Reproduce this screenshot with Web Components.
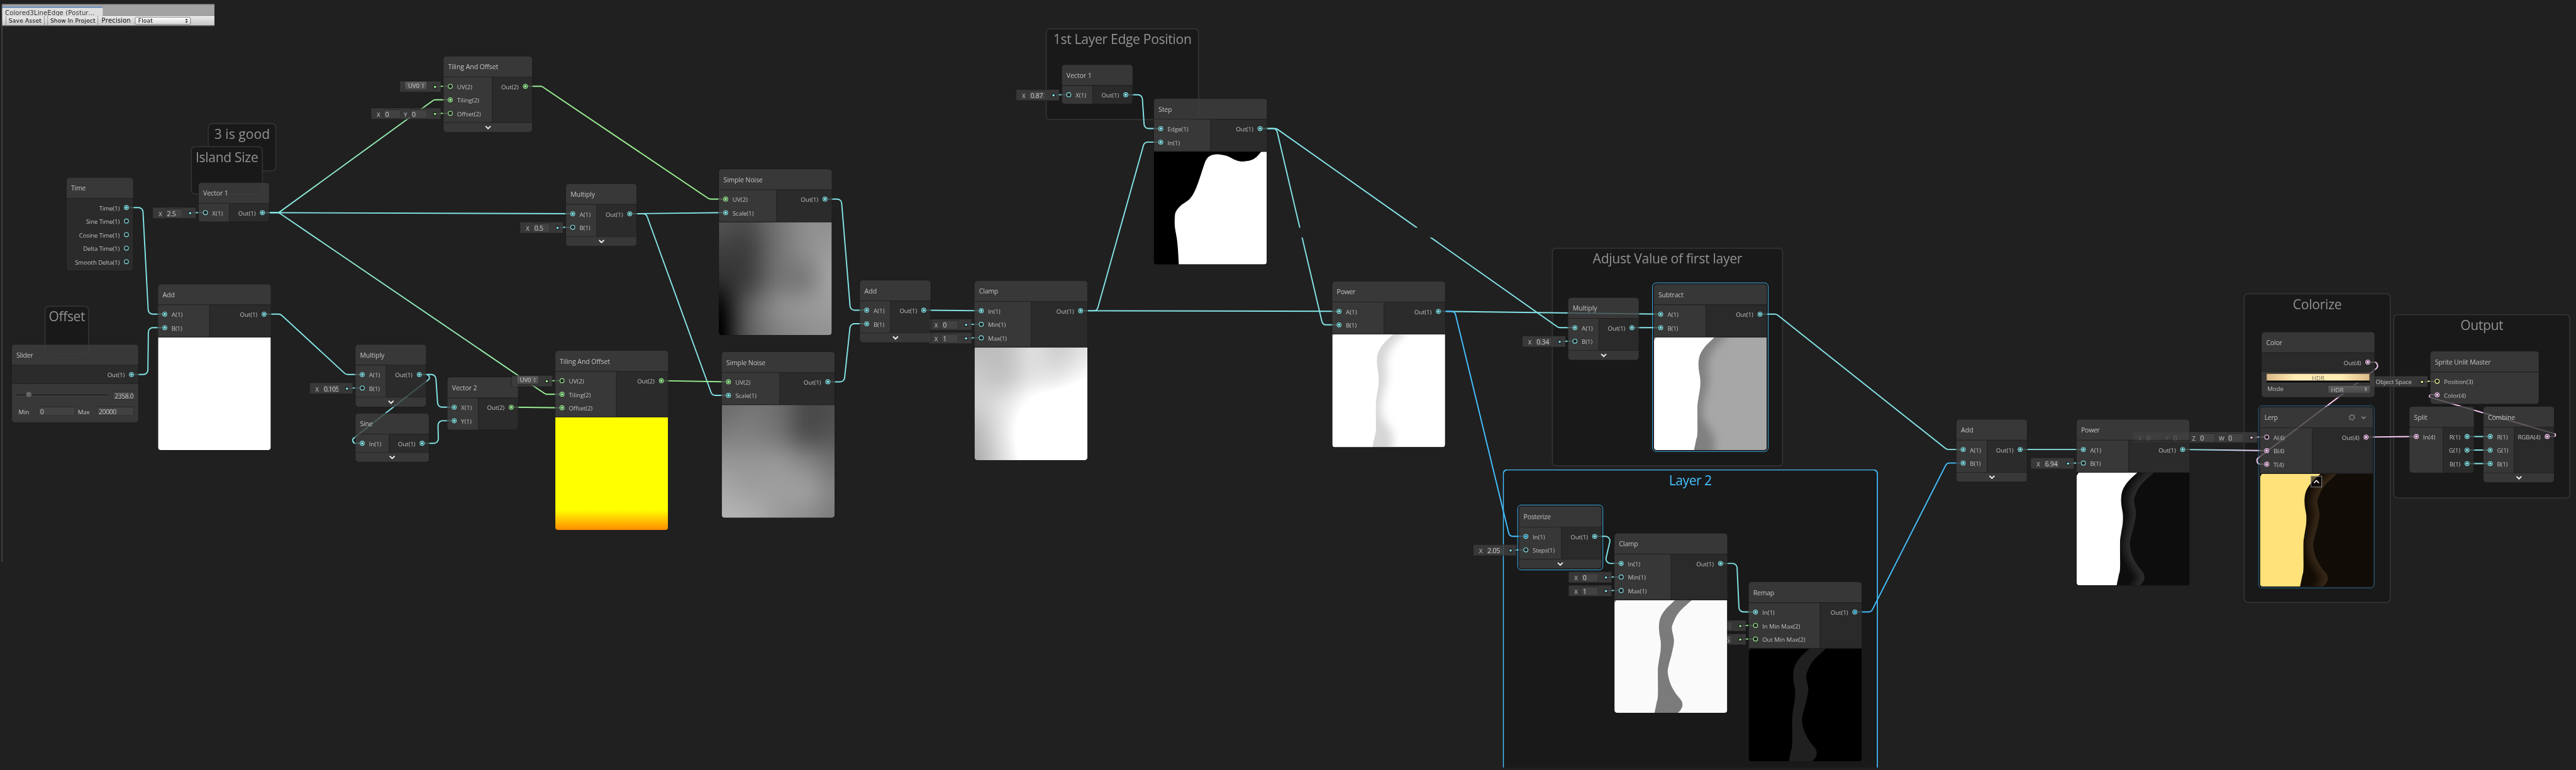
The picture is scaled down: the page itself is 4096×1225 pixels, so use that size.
<!DOCTYPE html>
<html lang="en">
<head>
<meta charset="utf-8">
<title>Shader Graph</title>
<style>
html,body{margin:0;background:#202020;overflow:hidden}
body{width:4096px;height:1225px;font-family:"Open Sans","Noto Sans",sans-serif}
</style>
</head>
<body>
<graph-canvas>
  <graph-group caption="3 is good" style="left:368px;top:218px;width:122px;height:86px"></graph-group>
  <graph-group caption="Island Size" style="left:338px;top:259px;width:128px;height:86px"></graph-group>
  <graph-group caption="Offset" style="left:79px;top:542px;width:79px;height:86px"></graph-group>
  <graph-group caption="1st Layer Edge Position" style="left:1853px;top:50px;width:272px;height:163px"></graph-group>
  <graph-group caption="Adjust Value of first layer" style="left:2750px;top:439px;width:410px;height:388px"></graph-group>
  <graph-group caption="Layer 2" selected style="left:2663px;top:832px;width:665px;height:529px"></graph-group>
  <graph-group caption="Colorize" style="left:3976px;top:520px;width:261px;height:549px"></graph-group>
  <graph-group caption="Output" style="left:4241px;top:557px;width:314px;height:327px"></graph-group>

  <graph-edges></graph-edges>

  <shader-node name="Time" style="left:118px;top:315px;width:118px">
    <graph-port slot="out" label="Time(1)" linked></graph-port>
    <graph-port slot="out" label="Sine Time(1)"></graph-port>
    <graph-port slot="out" label="Cosine Time(1)"></graph-port>
    <graph-port slot="out" label="Delta Time(1)"></graph-port>
    <graph-port slot="out" label="Smooth Delta(1)"></graph-port>
  </shader-node>
  <shader-node name="Vector 1" style="left:352px;top:324px;width:125px;--in:54px">
    <graph-port slot="in" label="X(1)" fields="X:2.5"></graph-port>
    <graph-port slot="out" label="Out(1)" linked></graph-port>
  </shader-node>
  <shader-node name="Add" style="left:280px;top:504px;width:200px;--in:91px">
    <graph-port slot="in" label="A(1)" linked></graph-port>
    <graph-port slot="in" label="B(1)" linked></graph-port>
    <graph-port slot="out" label="Out(1)" linked></graph-port>
    <node-preview slot="body" kind="white"></node-preview>
  </shader-node>
  <shader-node name="Slider" style="left:21px;top:611px;width:224px">
    <graph-port slot="out" label="Out(1)" linked></graph-port>
    <slider-controls slot="body"></slider-controls>
  </shader-node>
  <shader-node name="Tiling And Offset" foldable style="left:786px;top:100px;width:157px;--in:86px">
    <graph-port slot="in" kind="g" label="UV(2)" popup="UV0"></graph-port>
    <graph-port slot="in" kind="g" label="Tiling(2)" linked></graph-port>
    <graph-port slot="in" kind="g" label="Offset(2)" fields="X:0,Y:0"></graph-port>
    <graph-port slot="out" kind="g" label="Out(2)" linked></graph-port>
  </shader-node>
  <shader-node name="Multiply" foldable style="left:1003px;top:326px;width:125px;--in:54px">
    <graph-port slot="in" label="A(1)" linked></graph-port>
    <graph-port slot="in" label="B(1)" fields="X:0.5"></graph-port>
    <graph-port slot="out" label="Out(1)" linked></graph-port>
  </shader-node>
  <shader-node name="Multiply" foldable style="left:630px;top:611px;width:125px;--in:54px">
    <graph-port slot="in" label="A(1)" linked></graph-port>
    <graph-port slot="in" label="B(1)" fields="X:0.105"></graph-port>
    <graph-port slot="out" label="Out(1)" linked></graph-port>
  </shader-node>
  <shader-node name="Sine" foldable style="left:630px;top:733px;width:130px;--in:59px">
    <graph-port slot="in" label="In(1)" linked></graph-port>
    <graph-port slot="out" label="Out(1)" linked></graph-port>
  </shader-node>
  <shader-node name="Vector 2" style="left:793px;top:669px;width:125px;--in:54px">
    <graph-port slot="in" label="X(1)" linked></graph-port>
    <graph-port slot="in" label="Y(1)" linked></graph-port>
    <graph-port slot="out" kind="g" label="Out(2)" linked></graph-port>
  </shader-node>
  <shader-node name="Tiling And Offset" style="left:984px;top:622px;width:200px;--in:108px">
    <graph-port slot="in" kind="g" label="UV(2)" popup="UV0"></graph-port>
    <graph-port slot="in" kind="g" label="Tiling(2)" linked></graph-port>
    <graph-port slot="in" kind="g" label="Offset(2)" linked></graph-port>
    <graph-port slot="out" kind="g" label="Out(2)" linked></graph-port>
    <node-preview slot="body" kind="yellow"></node-preview>
  </shader-node>
  <shader-node name="Simple Noise" style="left:1274px;top:300px;width:200px;--in:102px">
    <graph-port slot="in" kind="g" label="UV(2)" linked></graph-port>
    <graph-port slot="in" label="Scale(1)" linked></graph-port>
    <graph-port slot="out" label="Out(1)" linked></graph-port>
    <node-preview slot="body" kind="noiseA"></node-preview>
  </shader-node>
  <shader-node name="Simple Noise" style="left:1279px;top:624px;width:200px;--in:102px">
    <graph-port slot="in" kind="g" label="UV(2)" linked></graph-port>
    <graph-port slot="in" label="Scale(1)" linked></graph-port>
    <graph-port slot="out" label="Out(1)" linked></graph-port>
    <node-preview slot="body" kind="noiseB"></node-preview>
  </shader-node>
  <shader-node name="Clamp" style="left:1727px;top:498px;width:200px;--in:100px">
    <graph-port slot="in" label="In(1)" linked></graph-port>
    <graph-port slot="in" label="Min(1)" fields="X:0"></graph-port>
    <graph-port slot="in" label="Max(1)" fields="X:1"></graph-port>
    <graph-port slot="out" label="Out(1)" linked></graph-port>
    <node-preview slot="body" kind="clamp"></node-preview>
  </shader-node>
  <shader-node name="Add" foldable style="left:1524px;top:497px;width:125px;--in:54px">
    <graph-port slot="in" label="A(1)" linked></graph-port>
    <graph-port slot="in" label="B(1)" linked></graph-port>
    <graph-port slot="out" label="Out(1)" linked></graph-port>
  </shader-node>
  <shader-node name="Vector 1" style="left:1882px;top:115px;width:125px;--in:54px">
    <graph-port slot="in" label="X(1)" fields="X:0.87"></graph-port>
    <graph-port slot="out" label="Out(1)" linked></graph-port>
  </shader-node>
  <shader-node name="Step" style="left:2045px;top:175px;width:200px;--in:100px">
    <graph-port slot="in" label="Edge(1)" linked></graph-port>
    <graph-port slot="in" label="In(1)" linked></graph-port>
    <graph-port slot="out" label="Out(1)" linked></graph-port>
    <node-preview slot="body" kind="step"></node-preview>
  </shader-node>
  <shader-node name="Power" style="left:2361px;top:499px;width:200px;--in:91px">
    <graph-port slot="in" label="A(1)" linked></graph-port>
    <graph-port slot="in" label="B(1)" linked></graph-port>
    <graph-port slot="out" label="Out(1)" linked></graph-port>
    <node-preview slot="body" kind="power"></node-preview>
  </shader-node>
  <shader-node name="Multiply" foldable style="left:2779px;top:528px;width:125px;--in:54px">
    <graph-port slot="in" label="A(1)" linked></graph-port>
    <graph-port slot="in" label="B(1)" fields="X:0.34"></graph-port>
    <graph-port slot="out" label="Out(1)" linked></graph-port>
  </shader-node>
  <shader-node name="Subtract" outline="full" style="left:2931px;top:504px;width:200px;--in:92px">
    <graph-port slot="in" label="A(1)" linked></graph-port>
    <graph-port slot="in" label="B(1)" linked></graph-port>
    <graph-port slot="out" label="Out(1)" linked></graph-port>
    <node-preview slot="body" kind="subtract"></node-preview>
  </shader-node>
  <shader-node name="Posterize" foldable outline="full" style="left:2692px;top:898px;width:146px;--in:75px">
    <graph-port slot="in" label="In(1)" linked dot="#44c0ff"></graph-port>
    <graph-port slot="in" label="Steps(1)" fields="X:2.05"></graph-port>
    <graph-port slot="out" label="Out(1)" linked></graph-port>
  </shader-node>
  <shader-node name="Remap" style="left:3099px;top:1032px;width:200px;--in:126px">
    <graph-port slot="in" label="In(1)" linked></graph-port>
    <graph-port slot="in" kind="g" label="In Min Max(2)" fields="X:0,Y:1"></graph-port>
    <graph-port slot="in" kind="g" label="Out Min Max(2)" fields="X:0,Y:0.15"></graph-port>
    <graph-port slot="out" label="Out(1)" linked dot="#44c0ff"></graph-port>
    <node-preview slot="body" kind="remap"></node-preview>
  </shader-node>
  <shader-node name="Clamp" style="left:2861px;top:946px;width:200px;--in:100px">
    <graph-port slot="in" label="In(1)" linked></graph-port>
    <graph-port slot="in" label="Min(1)" fields="X:0"></graph-port>
    <graph-port slot="in" label="Max(1)" fields="X:1"></graph-port>
    <graph-port slot="out" label="Out(1)" linked></graph-port>
    <node-preview slot="body" kind="band"></node-preview>
  </shader-node>
  <shader-node name="Add" foldable style="left:3467px;top:744px;width:125px;--in:54px">
    <graph-port slot="in" label="A(1)" linked></graph-port>
    <graph-port slot="in" label="B(1)" linked></graph-port>
    <graph-port slot="out" label="Out(1)" linked></graph-port>
  </shader-node>
  <shader-node name="Sprite Unlit Master" style="left:4307px;top:623px;width:192px;--in:192px">
    <graph-port slot="in" kind="y" label="Position(3)" space="Object Space"></graph-port>
    <graph-port slot="in" kind="p" label="Color(4)" linked></graph-port>
  </shader-node>
  <shader-node name="Lerp" tools outline="hover" style="left:4005px;top:722px;width:200px;--in:92px">
    <graph-port slot="in" kind="p" label="A(4)" fields="X:0,Y:0,Z:0,W:0"></graph-port>
    <graph-port slot="in" kind="p" label="B(4)" linked></graph-port>
    <graph-port slot="in" kind="p" label="T(4)" linked></graph-port>
    <graph-port slot="out" kind="p" label="Out(4)" linked></graph-port>
    <node-preview slot="body" kind="lerp"></node-preview>
  </shader-node>
  <shader-node name="Color" style="left:4008px;top:589px;width:200px">
    <graph-port slot="out" kind="p" label="Out(4)" linked></graph-port>
    <color-controls slot="body"></color-controls>
  </shader-node>
  <shader-node name="Power" style="left:3680px;top:744px;width:200px;--in:92px">
    <graph-port slot="in" label="A(1)" linked></graph-port>
    <graph-port slot="in" label="B(1)" fields="X:6.94"></graph-port>
    <graph-port slot="out" label="Out(1)" linked></graph-port>
    <node-preview slot="body" kind="glow"></node-preview>
  </shader-node>
  <shader-node name="Split" style="left:4270px;top:721px;width:114px;--in:59px">
    <graph-port slot="in" kind="p" label="In(4)" linked></graph-port>
    <graph-port slot="out" label="R(1)" linked></graph-port>
    <graph-port slot="out" label="G(1)" linked></graph-port>
    <graph-port slot="out" label="B(1)" linked></graph-port>
  </shader-node>
  <shader-node name="Combine" foldable style="left:4401px;top:721px;width:125px;--in:54px">
    <graph-port slot="in" label="R(1)" linked></graph-port>
    <graph-port slot="in" label="G(1)" linked></graph-port>
    <graph-port slot="in" label="B(1)" linked></graph-port>
    <graph-port slot="out" kind="p" label="RGBA(4)" linked></graph-port>
  </shader-node>

  <graph-toolbar></graph-toolbar>
</graph-canvas>

<script>
const UI = '"Open Sans","Noto Sans",sans-serif';
const KIND = {c:'#84e4e7', g:'#9aef92', p:'#fbcbf4', y:'#f6ff9a', b:'#44c0ff'};

/* Advance widths of the editor's UI face, in 1/2048 em. */
const ADV = {a:1042,b:1204,c:946,d:1206,e:1071,f:641,g:1206,h:1159,i:496,j:496,k:1018,l:496,m:1764,n:1159,o:1200,p:1204,q:1206,r:712,s:869,t:694,u:1159,v:981,w:1480,x:940,y:991,z:926,
A:1321,B:1174,C:1268,D:1436,E:1036,F:999,G:1405,H:1454,I:545,J:731,K:1188,L:963,M:1839,N:1532,O:1544,P:1147,Q:1544,R:1225,S:1087,T:1073,U:1407,V:1272,W:1913,X:1208,Y:1133,Z:1169,'(':618,')':618,' ':561,'.':444};
const pen = document.createElement('canvas').getContext('2d');

function define(name, css, html, connected) {
  customElements.define(name, class extends HTMLElement {
    constructor() { super(); this.attachShadow({mode:'open'}); }
    connectedCallback() {
      if (this.ready) return;
      this.ready = true;
      this.shadowRoot.innerHTML = `<style>${css}</style>` + (typeof html === 'function' ? html(this) : html);
      if (connected) connected(this, this.shadowRoot);
    }
  });
}

/* Text whose tracking is set so that it has the UI face's width, or the width in "w". */
define('ui-text', ':host{display:inline-block;white-space:pre;flex:none}', '<slot></slot>', el => {
  const t = el.textContent, em = parseFloat(el.getAttribute('size') || 11);
  const face = el.getAttribute('face') || UI;
  const px = el.hasAttribute('face') ? em : em * .98;
  let w = parseFloat(el.getAttribute('w'));
  if (!w) { w = 0; for (const c of t) w += (ADV[c] || 1104); w = w / 2048 * em; }
  pen.font = `${px}px ${face}`;
  el.style.fontFamily = face;
  el.style.fontSize = px + 'px';
  el.style.fontKerning = 'none';
  el.style.letterSpacing = ((w - pen.measureText(t).width) / t.length).toFixed(3) + 'px';
});

define('graph-canvas', `
:host{display:block;position:relative;width:4096px;height:1225px;background:#202020;overflow:hidden;contain:strict}
.stage{position:relative;width:4565px;height:1365px;transform:scale(.89726);transform-origin:0 0;overflow:hidden}`, '<div class="stage"><slot></slot></div>');

define('graph-group', `
:host{position:absolute;box-sizing:border-box;border:2px solid #323232;border-radius:8px;background:#191919;
 display:flex;justify-content:center;align-items:flex-start;color:#929292;line-height:34px}
:host([selected]){border-color:#44c0ff;color:#44c0ff;border-bottom:0;border-radius:8px 8px 0 0}`,
el => `<ui-text size="24">${el.getAttribute('caption')}</ui-text>`);

define('value-pill', `
:host{display:flex;align-items:center;height:19px;box-sizing:border-box;padding-left:10px;background:rgba(63,63,63,.8);box-shadow:0 0 0 1px rgba(25,25,25,.55);color:#c4c4c4;line-height:18px}
.k{width:12px}.k.w{width:14px}.k.y,.k.z{width:11.5px}
.f{width:30px;height:16px;box-sizing:border-box;margin-right:6px;border:1px solid #303030;border-top-color:#262626;background:#424242;padding-left:2px;line-height:13px;color:#d0d0d0;overflow:hidden}
.pop{width:38px;height:14px;margin:-3px 0 0 -1px;box-sizing:border-box;border-radius:2px;background:linear-gradient(#5e5e5e,#484848);box-shadow:0 0 0 .6px #2a2a2a,0 1px 0 #292929;display:flex;align-items:center;justify-content:space-between;padding:0 4px 0 5px;line-height:14px;color:#d0d0d0;margin-right:7px}
.dot{width:18px;height:100%;display:flex;align-items:center}
i{width:4px;height:4px;border-radius:50%;background:var(--c);box-shadow:0 0 0 1.5px #1f1f1f;margin-left:6px;flex:none}
b{width:6px;height:1.6px;margin-left:2px;background:var(--c);opacity:.25}`,
el => {
  const f = el.getAttribute('fields'), p = el.getAttribute('popup'), s = el.getAttribute('space');
  let h = '';
  if (f) for (const q of f.split(',')) {
    const [k, v] = q.split(':');
    h += `<div class="k ${k.toLowerCase()}"><ui-text>${k}</ui-text></div><div class="f"><ui-text size="12"${v.length > 4 ? ' w="26.500"' : ''}>${v}</ui-text></div>`;
  }
  if (p) h += `<div class="pop"><ui-text size="11">${p}</ui-text><svg width="5" height="8" viewBox="0 0 5 8"><path d="M2.5 0L4.700 3H.3zM2.5 8L.3 5h4.400z" fill="#a0a0a0"/></svg></div>`;
  if (s) h += `<ui-text size="11" w="64" style="margin-right:10px">${s}</ui-text>`;
  return h + '<div class="dot"><i></i><b></b></div>';
});

define('graph-port', `
:host{display:flex;align-items:center;height:24px;position:relative;color:#c0c0c0;line-height:24px}
:host([slot=out]){flex-direction:row-reverse}
svg{width:24px;height:24px;flex:none;display:block}
ui-text{padding-top:1.2px}
value-pill{position:absolute;right:calc(100% + 5px);top:3px}
.gap{position:absolute;right:calc(100% + 1px);top:11.2px;width:4px;height:1.8px;background:var(--c)}`,
el => {
  const c = KIND[el.getAttribute('kind') || 'c'];
  el.style.setProperty('--c', c);
  const dot = el.getAttribute('dot') || c;
  let pill = '', stub = '';
  for (const a of ['fields','popup','space']) if (el.hasAttribute(a)) {
    pill = `<value-pill ${a}="${el.getAttribute(a)}"></value-pill><span class="gap"></span>`;
    stub = `<path d="M0 12H8" stroke="${c}" stroke-width="1.6" opacity=".25"/>`;
  }
  return `${pill}<svg viewBox="0 0 24 24">${stub}<circle cx="12" cy="12" r="3.700" fill="#1e1e1e" stroke="${c}" stroke-width="1.250"/>${el.hasAttribute('linked') ? `<circle cx="12" cy="12" r="2.250" fill="${dot}"/>` : ''}</svg><ui-text>${el.getAttribute('label')}</ui-text>`;
});

define('shader-node', `
:host{position:absolute;display:flex;flex-direction:column;border-radius:5px;box-shadow:0 0 0 1px rgba(25,25,25,.75);color:#c4c4c4}
header{height:36px;box-sizing:border-box;padding:0 8px;display:flex;align-items:center;background:rgba(63,63,63,.8);border-radius:5px 5px 0 0;line-height:36px}
header ui-text{flex:1}
.io{display:flex;border-top:1px solid #232323}
.in,.out{padding:4px 0;box-sizing:border-box}
.in{width:var(--in,0);background:rgba(63,63,63,.8);flex:none}
.out{flex:1;background:rgba(46,46,46,.8);border-left:1px solid #232323}
.in.none{display:none}.none+.out{border-left:0}
.in.full{width:100%;border-radius:0 0 5px 5px}.full+.out{display:none}
.last .in{border-bottom-left-radius:5px}.last .out{border-bottom-right-radius:5px}.last .none+.out{border-bottom-left-radius:5px}
footer{height:16px;border-top:1px solid #232323;background:rgba(63,63,63,.8);border-radius:0 0 5px 5px;display:flex;justify-content:center;align-items:center}
.ring{position:absolute;inset:-3px;border:1px solid #44c0ff;border-radius:7px;pointer-events:none}
.ring.hover{border-color:#2b6f94}
.body{border-top:1px solid #232323}
svg{display:block}`,
el => {
  const has = s => !!el.querySelector(`:scope>[slot=${s}]`);
  const fold = el.hasAttribute('foldable'), body = has('body'), ring = el.getAttribute('outline');
  const tools = el.hasAttribute('tools') ? `<svg width="36" height="14" viewBox="0 0 36 14" fill="none"><circle cx="7" cy="7" r="3.900" stroke="#6e6e6e" stroke-width="2"/><circle cx="7" cy="7" r="5" stroke="#6e6e6e" stroke-width="1.600" stroke-dasharray="2.600 2.640"/><path d="M24 5.500l3.600 3.800L31.200 5.500" stroke="#929292" stroke-width="1.500"/></svg>` : '';
  return `<header><ui-text size="12">${el.getAttribute('name')}</ui-text>${tools}</header>
  <div class="io ${fold || body ? '' : 'last'}"><div class="in ${has('in') ? (has('out') ? '' : 'full') : 'none'}"><slot name="in"></slot></div><div class="out"><slot name="out"></slot></div></div>
  ${body ? '<div class="body"><slot name="body"></slot></div>' : ''}
  ${fold ? '<footer><svg width="12" height="8" viewBox="0 0 12 8"><path d="M1.600 1.600L6 6 10.400 1.600" fill="none" stroke="#ececec" stroke-width="2.200"/></svg></footer>' : ''}
  ${ring ? `<div class="ring ${ring}"></div>` : ''}`;
});

define('slider-controls', `
:host{display:flex;flex-direction:column;height:68px;box-sizing:border-box;padding:11px 8px 0;background:rgba(63,63,63,.8);border-radius:0 0 5px 5px;color:#c8c8c8}
.row{display:flex;align-items:center;height:17px}
.row+.row{margin-top:11px}
.track{width:164px;height:17px;display:flex;align-items:center;margin-right:7px}
.track div{width:100%;height:4px;border-radius:2px;background:linear-gradient(#262626 50%,#4a4a4a);position:relative}
.track i{position:absolute;left:17px;top:-4px;width:10px;height:10px;border-radius:50%;background:linear-gradient(#707070,#585858);box-shadow:0 1px 1px #222}
.f{height:16px;box-sizing:border-box;border:1px solid #303030;border-top-color:#242424;background:#424242;line-height:14px;padding-left:2px;flex:none}
span{display:block;line-height:17px}`,
`<div class="row"><div class="track"><div><i></i></div></div><div class="f" style="width:37px"><ui-text size="12" w="33.500">2358.0</ui-text></div></div>
<div class="row"><span style="width:35px;padding-left:4px"><ui-text size="11">Min</ui-text></span><div class="f" style="width:65px"><ui-text size="12" w="6.300">0</ui-text></div><span style="width:34px;padding-left:5px"><ui-text size="11">Max</ui-text></span><div class="f" style="width:65px"><ui-text size="12" w="31">20000</ui-text></div></div>`);

define('color-controls', `
:host{display:flex;flex-direction:column;height:45px;box-sizing:border-box;padding:3px 8px 0;background:rgba(63,63,63,.8);border-radius:0 0 5px 5px;color:#c0c0c0}
.bar{height:16px;box-sizing:border-box;border:1px solid #6b5a45;border-bottom:3px solid #000;background:linear-gradient(90deg,#dcb98a,#ffedb4 28%,#ffedb4 72%,#dcb98a);display:flex;justify-content:center;line-height:13px;color:#7b7463}
.row{display:flex;justify-content:space-between;align-items:center;height:22px;padding-left:2px;line-height:20px}
.pop{width:74px;height:13px;margin-top:2px;box-sizing:border-box;border-radius:2px;background:linear-gradient(#5e5e5e,#484848);box-shadow:0 0 0 .6px #2a2a2a,0 1px 0 #292929;display:flex;align-items:center;justify-content:space-between;padding:0 5px;line-height:13px}`,
`<div class="bar"><ui-text size="11">HDR</ui-text></div><div class="row"><ui-text size="11">Mode</ui-text><div class="pop"><ui-text size="11">HDR</ui-text><svg width="5" height="8" viewBox="0 0 5 8"><path d="M2.500 0L4.700 3.500H.3zM2.500 8L.3 4.500h4.400z" fill="#a0a0a0"/></svg></div></div>`);

/* Preview pictures, each 200 by 200. */
const GRID = {
 noiseA:[[80,78,112,140,145],[64,66,110,138,155],[46,66,112,126,162],[10,88,134,148,156],[0,88,125,140,148]],
 noiseB:[[108,116,108,76,78],[125,128,116,84,86],[150,148,148,132,112],[168,160,158,154,130],[180,174,156,142,125]],
 clamp:[[190,192,220,208,228],[202,198,226,232,252],[206,226,262,280,300],[186,230,285,300,300],[174,222,278,300,300]]
};
function curve(p) {
  let d = '';
  for (let i = 0; i < p.length - 1; i++) {
    const a = p[i-1] || p[i], b = p[i], c = p[i+1], e = p[i+2] || c;
    d += `C${b[0]+(c[0]-a[0])/6} ${b[1]+(c[1]-a[1])/6} ${c[0]-(e[0]-b[0])/6} ${c[1]-(e[1]-b[1])/6} ${c[0]} ${c[1]}`;
  }
  return d;
}
const L1 = [[107.5,0],[91,16],[82,30],[79,44],[79.5,58],[82,74],[81.7,90],[78.5,110],[77,125],[77,169],[74.5,183],[71,200]];
const L2 = [[137,0],[114,22],[103.5,42],[102,52],[105.5,72],[102,93],[95.8,117],[94.6,130],[99.5,149],[109,166],[118.5,178],[120.5,187],[117,195],[112,200]];
const ST = [[190,0],[182,9],[172,15],[156,17.5],[145,15],[133,9],[123,6],[111,4.7],[100,7],[93.5,12.7],[88.5,24],[82,44],[74,66],[64,83],[47,96],[39,106],[37,115],[37,133],[40.5,154],[42.5,174],[44,200]];
const leftOf = `M0 0H107.500${curve(L1)}H0Z`;
const rightOf2 = `M200 0H137${curve(L2)}H200Z`;
const between = `M107.500 0${curve(L1)}L112 200${curve([...L2].reverse())}Z`;
const rightOf1 = `M200 0H107.500${curve(L1)}H200Z`;
const nick = 'M0 0H3.500L0 5.500Z';
let serial = 0;
function soft(base, shade, left) {
  const n = ++serial;
  return `<defs><clipPath id="k${n}"><path d="${rightOf1}"/></clipPath><filter id="f${n}" x="-50%" y="-20%" width="200%" height="140%"><feGaussianBlur stdDeviation="8"/></filter></defs>
  <rect width="200" height="200" fill="${base}"/><g clip-path="url(#k${n})"><path filter="url(#f${n})" fill="${shade}" d="M40 -40H150L126 0C100 20 92 40 96 66C99 85 88 104 86 128C84 150 104 165 108 180L102 240H40Z"/></g><path d="${leftOf}" fill="${left}"/><path d="${nick}" fill="${shade}"/>`;
}
function lit(left, mid, hi, right) {
  const n = ++serial;
  return `<defs><clipPath id="k${n}"><path d="${between}"/></clipPath><filter id="f${n}" x="-50%" y="-20%" width="200%" height="140%"><feGaussianBlur stdDeviation="6"/></filter></defs>
  <rect width="200" height="200" fill="${mid}"/><g clip-path="url(#k${n})"><path filter="url(#f${n})" fill="none" stroke="${hi}" stroke-width="22" d="M160 -30L137 0${curve(L2)}L100 225"/></g><path d="${rightOf2}" fill="${right}"/><path d="${leftOf}" fill="${left}"/><path d="${nick}" fill="${mid}"/>`;
}
const bands = (a, b) => `<rect width="200" height="200" fill="${a}"/><path d="${between}" fill="${b}"/><path d="${nick}" fill="${b}"/>`;
const PIC = {
  white: () => '<rect width="200" height="200" fill="#fff"/>',
  yellow: () => '<defs><linearGradient id="y" x2="0" y2="1"><stop offset=".82" stop-color="#ff0"/><stop offset="1" stop-color="#ff8a00"/></linearGradient></defs><rect width="200" height="200" fill="url(#y)"/>',
  step: () => `<rect width="200" height="200"/><path fill="#fff" d="M200 0H190${curve(ST)}H200Z"/>`,
  power: () => soft('#fff', '#d6d6d6', '#fff'),
  subtract: () => soft('#a7a7a7', '#808080', '#fff'),
  band: () => bands('#fafafa', '#7b7b7b'),
  remap: () => bands('#000', '#202020'),
  glow: () => lit('#fff', '#0e0e0e', '#2a2a2a', '#0d0d0d'),
  lerp: () => lit('#ffe27a', '#140d06', '#362516', '#120c06')
};
define('node-preview', `
:host{display:block;position:relative;width:200px;height:200px;border-radius:0 0 5px 5px;overflow:hidden}
svg,canvas{display:block;width:200px;height:200px}
.fold{position:absolute;left:90px;top:4px;width:20px;height:20px;box-sizing:border-box;border:1px solid #a0a0a0;background:rgba(0,0,0,.62);display:flex;align-items:center;justify-content:center}
.fold svg{width:12px;height:8px}`,
el => {
  const k = el.getAttribute('kind');
  if (GRID[k]) return '<canvas width="200" height="200"></canvas>';
  return `<svg viewBox="0 0 200 200">${PIC[k]()}</svg>` + (k === 'lerp' ? '<div class="fold"><svg viewBox="0 0 12 8"><path d="M1.600 6.400L6 2l4.400 4.400" fill="none" stroke="#f0f0f0" stroke-width="2"/></svg></div>' : '');
},
(el, root) => {
  const g = GRID[el.getAttribute('kind')];
  if (!g) return;
  const N = g.length - 1, ctx = root.querySelector('canvas').getContext('2d'), im = ctx.createImageData(200, 200);
  const at = (i, j) => g[Math.max(0, Math.min(N, i))][Math.max(0, Math.min(N, j))];
  const cr = (a, b, c, d, t) => b + .5 * t * (c - a + t * (2*a - 5*b + 4*c - d + t * (3*(b - c) + d - a)));
  for (let y = 0; y < 200; y++) for (let x = 0; x < 200; x++) {
    const u = x / 200 * N, v = y / 200 * N, j = u | 0, i = v | 0, r = [];
    for (let m = -1; m < 3; m++) r.push(cr(at(i+m, j-1), at(i+m, j), at(i+m, j+1), at(i+m, j+2), u - j));
    const c = cr(...r, v - i), o = (y * 200 + x) * 4;
    im.data[o] = im.data[o+1] = im.data[o+2] = c; im.data[o+3] = 255;
  }
  ctx.putImageData(im, 0, 0);
});

/* Wires: from x, y, to x, y, then the colours of the two ends. */
const WIRES = [
 [465,377,798,177,'c','g'],[465,377,1015,379,'c','c'],[465,377,996,699,'c','g'],
 [1116,379,1286,377,'c','c'],[1116,379,1291,701,'c','c'],[931,153,1286,353,'g','g'],[1172,675,1291,677,'g','g'],
 [224,368,292,557,'c','c'],[233,664,292,581,'c','c'],[468,557,642,664,'c','c'],
 [743,664,805,722,'c','c'],[748,786,805,746,'c','c'],[906,722,996,723,'g','g'],
 [1462,353,1536,550,'c','c'],[1467,677,1536,574,'c','c'],[1637,550,1739,551,'c','c'],
 [1915,551,2057,252,'c','c'],[1915,551,2373,552,'c','c'],[1995,168,2057,228,'c','c'],
 [2233,228,2373,576,'c','c'],[2233,228,2791,581,'c','c'],
 [2549,552,2943,557,'c','c'],[2549,552,2704,951,'b','b'],[2892,581,2943,581,'c','c'],[3119,557,3479,797,'c','c'],
 [2826,951,2873,999,'c','c'],[3049,999,3111,1085,'c','c'],[3287,1085,3479,821,'b','b'],
 [3580,797,3692,797,'c','c'],[3868,797,4017,799,'c','p'],[4193,775,4282,774,'p','p'],
 [4372,774,4413,774,'c','c'],[4372,798,4413,798,'c','c'],[4372,822,4413,822,'c','c']
];
const LOOPS = [
 ['M743 664H754.500A5.500 5.500 0 0 1 757.500 674.500L628 776A5.300 5.300 0 0 0 631 786H642','c'],
 ['M4196 642H4207A6.500 6.500 0 0 1 4211 653.500L4002.500 811.500A6.300 6.300 0 0 0 4005 823H4017','p'],
 ['M4514 774H4526A2.600 2.600 0 0 0 4527 769L4306.500 704.500A2.400 2.400 0 0 1 4307 700H4319','p']
];
function wire(x0, y0, x1, y1) {
  if (Math.abs(y1 - y0) < 6) return `M${x0} ${y0}L${x1} ${y1}`;
  const a = x0 + 29, b = x1 - 29, L = Math.hypot(b - a, y1 - y0), ux = (b - a) / L, uy = (y1 - y0) / L;
  const t = Math.min(8 * Math.tan(Math.acos(ux) / 2), L / 2, 20), f = n => n.toFixed(2);
  const down = y1 > y0 ? 1 : 0;
  return `M${x0} ${y0}H${f(a-t)}A8 8 0 0 ${down} ${f(a+ux*t)} ${f(y0+uy*t)}L${f(b-ux*t)} ${f(y1-uy*t)}A8 8 0 0 ${1-down} ${f(b+t)} ${y1}H${x1}`;
}
define('graph-edges', ':host{position:absolute;inset:0;display:block}svg{display:block}', () => {
  let defs = '', out = '';
  WIRES.forEach((w, i) => {
    let s = KIND[w[4]];
    if (w[4] !== w[5]) {
      defs += `<linearGradient id="w${i}" gradientUnits="userSpaceOnUse" x1="${w[0]}" y1="0" x2="${w[2]}" y2="0"><stop stop-color="${KIND[w[4]]}"/><stop offset="1" stop-color="${KIND[w[5]]}"/></linearGradient>`;
      s = `url(#w${i})`;
    }
    out += `<path d="${wire(...w)}" stroke="${s}"/>`;
  });
  for (const [d, k] of LOOPS) out += `<path d="${d}" stroke="${KIND[k]}"/>`;
  return `<svg width="4565" height="1365" viewBox="0 0 4565 1365"><defs>${defs}</defs><g fill="none" stroke-width="2.150">${out}</g>
  <rect x="2270" y="403.700" width="300" height="17.400" fill="#202020"/><rect x="3" y="8" width="1" height="988" fill="#646464"/></svg>`;
});

define('graph-toolbar', `
:host{position:absolute;left:4px;top:7px;width:376px;height:39px;display:flex;flex-direction:column;color:#000}
.tabs{height:21px;box-sizing:border-box;background:#a2a2a2;border-top:1px solid #505050;border-bottom:1px solid #858585;display:flex;align-items:flex-end}
.tab{width:178px;height:16px;box-sizing:border-box;background:#dedede;border-top:2px solid #3a72c4;border-radius:0 2px 0 0;padding-left:5px;line-height:14px;color:#333;margin-bottom:-1px}
.bar{height:18px;box-sizing:border-box;display:flex;align-items:center;background:linear-gradient(#ebebeb,#c6c6c6);border-bottom:1px solid #8d8d8d;line-height:18px}
.b{height:100%;box-sizing:border-box;border:solid #8a8a8a;border-width:0 1px;display:flex;justify-content:center}
.pop{width:99px;height:14px;margin-left:7px;box-sizing:border-box;border:1px solid #7a7a7a;border-radius:3px;background:linear-gradient(#fcfcfc,#d8d8d8);display:flex;align-items:center;justify-content:space-between;padding:0 4px 0 5px;line-height:12px}`,
`<div class="tabs"><div class="tab"><ui-text face="DejaVu Sans" size="11.200" w="157">Colored3LineEdge (Postur...</ui-text></div></div>
<div class="bar"><div class="b" style="margin-left:6px;width:69px"><ui-text face="DejaVu Sans" size="10.200" w="58.500">Save Asset</ui-text></div><div class="b" style="margin-left:5px;width:90px"><ui-text face="DejaVu Sans" size="10.200" w="79.500">Show In Project</ui-text></div>
<ui-text face="DejaVu Sans" size="11" w="51.500" style="margin-left:6px">Precision</ui-text>
<div class="pop"><ui-text face="DejaVu Sans" size="10.200" w="26">Float</ui-text><svg width="5" height="8" viewBox="0 0 5 8"><path d="M2.500 0L4.700 3H.3zM2.500 8L.3 5h4.400z" fill="#222"/></svg></div></div>`);
</script>
</body>
</html>
